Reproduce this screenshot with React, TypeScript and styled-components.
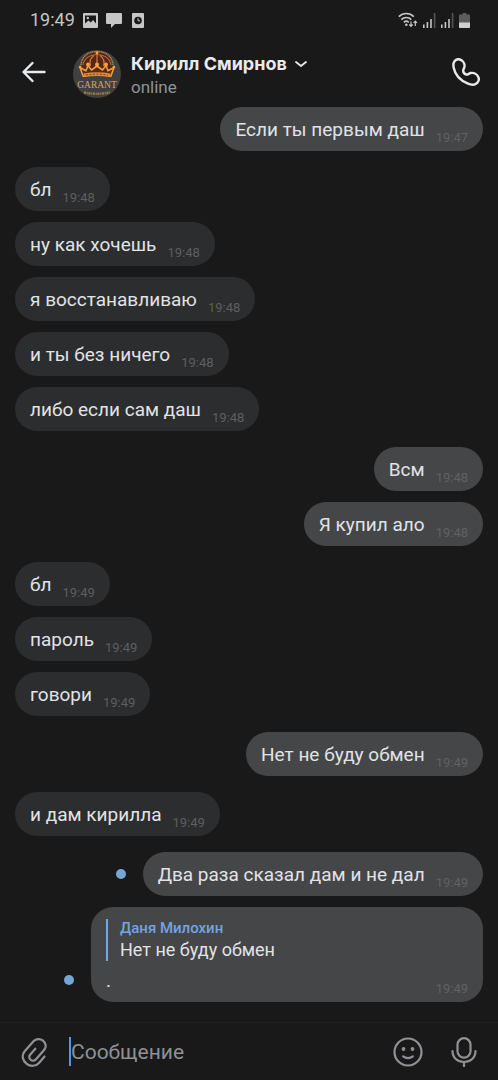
import React from "react";
import styled, { createGlobalStyle } from "styled-components";

const GlobalStyle = createGlobalStyle`
  *, *::before, *::after { box-sizing: border-box; }
  body {
    margin: 0;
    background: #19191a;
    color: #e1e3e6;
    font-family: Roboto, "Noto Sans", sans-serif;
  }
`;

const Screen = styled.div`
  display: flex;
  flex-direction: column;
  min-height: 100vh;
`;

const StatusBar = styled.div`
  display: flex;
  align-items: center;
  justify-content: space-between;
  height: 40px;
  padding: 0 28px 0 30px;
  color: #c6c6c6;
`;

const StatusGroup = styled.div<{ $gap: number }>`
  display: flex;
  align-items: center;
  gap: ${(p) => p.$gap}px;
`;

const Clock = styled.time`
  font-size: 18px;
  line-height: 20px;
`;

const Header = styled.header`
  display: flex;
  align-items: center;
  height: 67px;
  padding: 0 16px 0 18px;
`;

const IconButton = styled.button`
  display: flex;
  flex: none;
  align-items: center;
  justify-content: center;
  width: 32px;
  height: 32px;
  padding: 0;
  border: 0;
  background: none;
  color: inherit;
  cursor: pointer;
`;

const HeaderButton = styled(IconButton)`
  height: 36px;
  padding-bottom: 4px;
  color: #e9eaec;
`;

const Avatar = styled.svg`
  flex: none;
  margin-left: 23px;
`;

const Person = styled.div`
  flex: 1;
  min-width: 0;
  padding: 2px 0 0 10px;
`;

const NameRow = styled.button`
  display: flex;
  align-items: center;
  gap: 8px;
  padding: 0;
  border: 0;
  background: none;
  color: #e9eaec;
  font: 700 18px/24px Inter, sans-serif;
  white-space: nowrap;
  cursor: pointer;
`;

const Presence = styled.div`
  color: #909499;
  font-size: 17px;
  line-height: 22px;
`;

const Conversation = styled.main`
  display: flex;
  flex: 1;
  flex-direction: column;
  gap: 16px;
  padding: 0 15px 18px;
`;

const Group = styled.section<{ $own: boolean }>`
  display: flex;
  flex-direction: column;
  align-items: ${(p) => (p.$own ? "flex-end" : "flex-start")};
  gap: 11px;
`;

const MessageRow = styled.div`
  display: flex;
  align-items: flex-end;
  gap: 17px;
`;

const UnreadDot = styled.span`
  flex: none;
  width: 10px;
  height: 10px;
  margin-bottom: 17px;
  border-radius: 50%;
  background: #78a5d8;
`;

const Bubble = styled.article<{ $own: boolean }>`
  padding: 0 15px;
  border-radius: 22px;
  background: ${(p) => (p.$own ? "#454648" : "#2c2d2e")};
  color: #e1e3e6;
`;

const Line = styled.div`
  display: flex;
  align-items: flex-end;
  justify-content: space-between;
  gap: 11px;
  height: 44px;
  padding-bottom: 5px;
`;

const Text = styled.p`
  margin: 0;
  padding-bottom: 4px;
  font-size: 19px;
  line-height: 24px;
`;

const Time = styled.time<{ $own: boolean }>`
  color: ${(p) => (p.$own ? "#606163" : "#5e5f61")};
  font-size: 13px;
  line-height: 16px;
`;

const Quote = styled.blockquote`
  width: 362px;
  max-width: 100%;
  height: 51px;
  margin: 0;
  padding-top: 12px;
`;

const QuoteBody = styled.div`
  padding-left: 12px;
  border-left: 2px solid #71aaeb;
`;

const QuoteAuthor = styled.cite`
  display: block;
  color: #71a5e2;
  font-size: 15px;
  font-style: normal;
  font-weight: 500;
  line-height: 18px;
`;

const QuoteText = styled.p`
  margin: 0;
  padding-top: 2px;
  font-size: 18px;
  line-height: 22px;
`;

const Composer = styled.form`
  display: flex;
  align-items: center;
  height: 58px;
  padding: 0 18px;
  border-top: 1px solid #1f1f20;
  color: #8f9194;
`;

const MessageInput = styled.input`
  flex: 1;
  min-width: 0;
  height: 29px;
  margin: 0 20px 0 19px;
  padding: 0;
  border: 0;
  border-left: 2px solid #5d96d8;
  outline: 0;
  background: none;
  color: #e1e3e6;
  font: 21px/28px Roboto, "Noto Sans", sans-serif;
  &::placeholder { color: #8f9194; opacity: 1; }
`;

const ComposerActions = styled.div`
  display: flex;
  gap: 24px;
`;

type Message = { text: string; time: string; unread?: boolean; quote?: { author: string; text: string } };
type MessageGroup = { own: boolean; messages: Message[] };

const groups: MessageGroup[] = [
  { own: true, messages: [{ text: "Если ты первым даш", time: "19:47" }] },
  {
    own: false,
    messages: [
      { text: "бл", time: "19:48" },
      { text: "ну как хочешь", time: "19:48" },
      { text: "я восстанавливаю", time: "19:48" },
      { text: "и ты без ничего", time: "19:48" },
      { text: "либо если сам даш", time: "19:48" },
    ],
  },
  {
    own: true,
    messages: [
      { text: "Всм", time: "19:48" },
      { text: "Я купил ало", time: "19:48" },
    ],
  },
  {
    own: false,
    messages: [
      { text: "бл", time: "19:49" },
      { text: "пароль", time: "19:49" },
      { text: "говори", time: "19:49" },
    ],
  },
  { own: true, messages: [{ text: "Нет не буду обмен", time: "19:49" }] },
  { own: false, messages: [{ text: "и дам кирилла", time: "19:49" }] },
  {
    own: true,
    messages: [
      { text: "Два раза сказал дам и не дал", time: "19:49", unread: true },
      { text: ".", time: "19:49", unread: true, quote: { author: "Даня Милохин", text: "Нет не буду обмен" } },
    ],
  },
];

const SignalIcon = () => (
  <svg width="13" height="15" viewBox="0 0 13 15" fill="currentColor" aria-hidden="true">
    <rect x="0" y="11.5" width="1.6" height="3.5" />
    <rect x="3.6" y="9" width="1.6" height="6" />
    <rect x="7.2" y="6" width="1.6" height="9" />
    <rect x="10.8" y="0" width="1.6" height="15" opacity=".35" />
  </svg>
);

const WifiIcon = () => (
  <svg width="20" height="16" viewBox="0 0 20 16" fill="none" stroke="currentColor" strokeWidth="1.7" aria-hidden="true">
    <path d="M.8 4.7a10.4 10.4 0 0 1 15 0M3.3 7.6a7 7 0 0 1 10 0M5.8 10.3a3.7 3.7 0 0 1 5 0" />
    <circle cx="8.3" cy="12.7" r="1.3" fill="currentColor" stroke="none" />
    <path d="M13 9.5v4.8M11.3 12.5l1.7 1.8 1.7-1.8M17.3 14V9M15.6 10.8 17.3 9l1.7 1.8" strokeWidth="1.2" />
  </svg>
);

const CrownAvatar = () => (
  <Avatar width="48" height="48" viewBox="0 0 48 48" role="img" aria-label="Garant">
    <circle cx="24" cy="24" r="24" fill="#404040" />
    <path d="M9 18C7 8 14 2.500 24 2.500S41 8 39 18l-3 6H12z" fill="#54271a" />
    <path d="M8 15C9 5.500 16 1.500 24 1.500S39 5.500 40 15" fill="none" stroke="#b98a52" strokeWidth="1.400" strokeDasharray="1.200 .6" />
    <path d="M10 15C11 8 17 4.500 24 4.500S37 8 38 15" fill="none" stroke="#b9672c" strokeWidth="1.200" />
    <path d="M24 4v14M17.500 16C16 11 18 7.500 21 5.500M30.500 16C32 11 30 7.500 27 5.500" fill="none" stroke="#c9752f" strokeWidth="1.300" />
    <path d="M7 17.500l6 3.300 2-5.300 3.500 4.500 5.500-4 5.500 4 3.500-4.500 2 5.300 6-3.300-3.200 8.700q-13.800-3-27.600 0z" fill="#5a2915" stroke="#ee9d3b" strokeWidth="1.600" strokeLinejoin="round" />
    <path d="M10.500 23.500q13.500-2.600 27 0l-.8 3.500q-12.700-2.200-25.400 0z" fill="#e38a2c" />
    <path d="M13 25q11-1.600 22 0" fill="none" stroke="#7b3d18" strokeWidth="1" strokeDasharray="2 1.500" />
    <g fill="#f2a445">
      <circle cx="7" cy="17" r="1.300" />
      <circle cx="15" cy="14.500" r="2" />
      <circle cx="24" cy="14.500" r="2" />
      <circle cx="33" cy="14.500" r="2" />
      <circle cx="41" cy="17" r="1.300" />
      <circle cx="24" cy="2.800" r="1.500" />
    </g>
    <text x="24" y="37.500" textAnchor="middle" fontFamily="Liberation Serif, serif" fontSize="9.500" fill="#d7a757">GARANT</text>
    <path d="M11 42.500q13 2.500 26 0" fill="none" stroke="#a07b47" strokeWidth="2.400" strokeDasharray="2 .8 1 .7" />
  </Avatar>
);

function MessageItem({ message, own }: { message: Message; own: boolean }) {
  return (
    <MessageRow>
      {message.unread && <UnreadDot />}
      <Bubble $own={own}>
        {message.quote && (
          <Quote>
            <QuoteBody>
              <QuoteAuthor>{message.quote.author}</QuoteAuthor>
              <QuoteText>{message.quote.text}</QuoteText>
            </QuoteBody>
          </Quote>
        )}
        <Line>
          <Text>{message.text}</Text>
          <Time $own={own}>{message.time}</Time>
        </Line>
      </Bubble>
    </MessageRow>
  );
}

export default function App() {
  return (
    <Screen>
      <GlobalStyle />
      <StatusBar>
        <StatusGroup $gap={8}>
          <Clock>19:49</Clock>
          <svg width="15" height="15" viewBox="0 0 15 15" aria-hidden="true">
            <rect width="15" height="15" rx="1" fill="#c6c6c6" />
            <path d="M2 2.500h11v8L10 7 7.800 9.500 5.500 7.500 2 10.500z" fill="#19191a" />
            <circle cx="4.800" cy="5" r="1.200" fill="#c6c6c6" />
          </svg>
          <svg width="16" height="15" viewBox="0 0 16 15" fill="#c6c6c6" aria-hidden="true">
            <path d="M1 0h14q1 0 1 1v9q0 1-1 1H9l-4 4v-4H1q-1 0-1-1V1q0-1 1-1z" />
          </svg>
          <svg width="14" height="15" viewBox="0 0 14 15" aria-hidden="true">
            <rect x="2" width="12" height="15" rx="1" fill="#c6c6c6" />
            <circle cx="8" cy="7.500" r="3.800" fill="#19191a" />
            <path d="M8 5.200v2.600h2" fill="none" stroke="#c6c6c6" />
          </svg>
        </StatusGroup>
        <StatusGroup $gap={5}>
          <WifiIcon />
          <SignalIcon />
          <SignalIcon />
          <svg width="11" height="15" viewBox="0 0 11 15" aria-hidden="true">
            <path d="M3.500 0h4v1.500H10q1 0 1 1V14q0 1-1 1H1q-1 0-1-1V2.500q0-1 1-1h2.500z" fill="#5c5c5c" />
            <path d="M0 9.500h11V14q0 1-1 1H1q-1 0-1-1z" fill="#cfcfcf" />
          </svg>
        </StatusGroup>
      </StatusBar>

      <Header>
        <HeaderButton aria-label="Назад">
          <svg width="26" height="24" viewBox="0 0 26 24" fill="none" stroke="currentColor" strokeWidth="2.400" strokeLinecap="round" strokeLinejoin="round">
            <path d="M23.500 12H3M11.500 3l-9 9 9 9" />
          </svg>
        </HeaderButton>
        <CrownAvatar />
        <Person>
          <NameRow>
            Кирилл Смирнов
            <svg width="12" height="8" viewBox="0 0 12 8" fill="none" stroke="currentColor" strokeWidth="1.800" strokeLinecap="round" strokeLinejoin="round" aria-hidden="true">
              <path d="M1 2l5 4 5-4" />
            </svg>
          </NameRow>
          <Presence>online</Presence>
        </Person>
        <HeaderButton aria-label="Позвонить">
          <svg width="28" height="28" viewBox="0 0 28 28" fill="none" stroke="currentColor" strokeWidth="2.400" strokeLinejoin="round">
            <path d="M2.500 3.300C3.800 1.300 6 .900 7.900 1.500c3 1 5 4.100 4.600 7.200-.2 1.500-1.200 2.400-1.300 3.600-.1 1.700 1.200 3.600 3 4.200 1.700.6 2.500-1.200 4.600-1.500 3.200-.5 6.400 1.400 7.600 4.200.8 1.900.4 4-1.200 5.600-2 2-5.800 2.300-9.200.9C8.300 22.600 3 16.500 1.700 9.800c-.5-2.500-.4-4.900.8-6.500z" />
          </svg>
        </HeaderButton>
      </Header>

      <Conversation>
        {groups.map((group, i) => (
          <Group key={i} $own={group.own}>
            {group.messages.map((message, j) => (
              <MessageItem key={j} message={message} own={group.own} />
            ))}
          </Group>
        ))}
      </Conversation>

      <Composer onSubmit={(e) => e.preventDefault()}>
        <IconButton type="button" aria-label="Прикрепить">
          <svg width="28" height="30" viewBox="0 0 28 30" fill="none" stroke="currentColor" strokeWidth="2.200" strokeLinecap="round" strokeLinejoin="round">
            <path d="M24.500 19.500l-5.300 6.200c-3.200 3.700-8.700 4.100-12.500 1.100-4.300-3.300-5.400-8.700-2-12.600L13.500 4.300c2.400-2.700 6.600-3 9.500-.6 3 2.400 3.600 6.300 1.300 9L16 22.300c-1.400 1.600-3.700 1.800-5.300.5-1.600-1.300-1.900-3.600-.6-5.100l5.200-6" />
          </svg>
        </IconButton>
        <MessageInput placeholder="Сообщение" aria-label="Сообщение" />
        <ComposerActions>
          <IconButton type="button" aria-label="Смайлы">
            <svg width="30" height="30" viewBox="0 0 30 30" fill="none" stroke="currentColor" strokeWidth="2.200" strokeLinecap="round">
              <circle cx="15" cy="15" r="13.500" />
              <circle cx="10.500" cy="12" r="1.900" fill="currentColor" stroke="none" />
              <circle cx="19.500" cy="12" r="1.900" fill="currentColor" stroke="none" />
              <path d="M10.200 19.300c2.700 2.300 6.900 2.300 9.600 0" />
            </svg>
          </IconButton>
          <IconButton type="button" aria-label="Голосовое сообщение">
            <svg width="26" height="30" viewBox="0 0 26 30" fill="none" stroke="currentColor" strokeWidth="2.200" strokeLinecap="round">
              <rect x="6.500" y="1.200" width="13" height="19.500" rx="6.500" />
              <path d="M1.500 14c0 6.700 5 11 11.500 11s11.500-4.300 11.500-11M13 25v4" />
            </svg>
          </IconButton>
        </ComposerActions>
      </Composer>
    </Screen>
  );
}
